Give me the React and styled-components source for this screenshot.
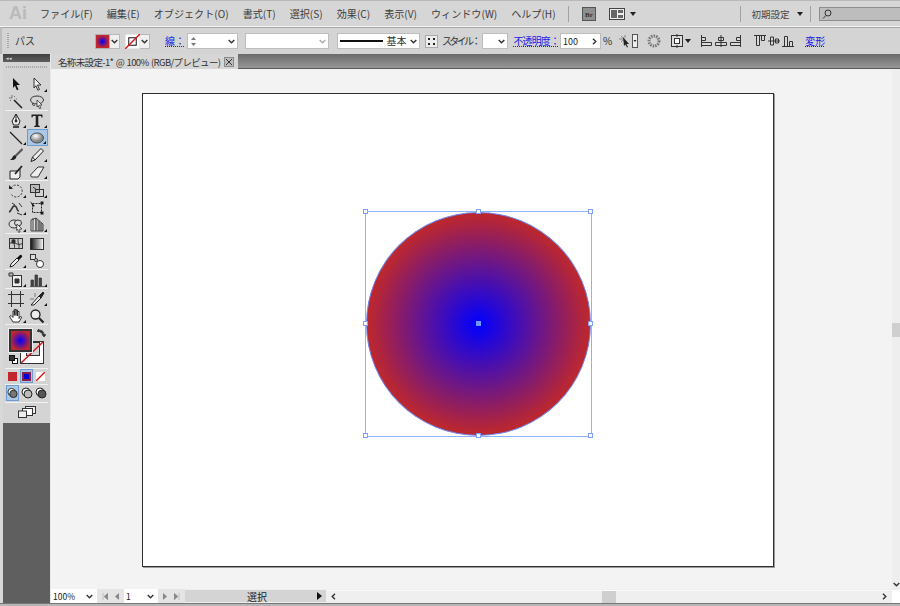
import React from "react";
import styled, { createGlobalStyle } from "styled-components";

const GlobalStyle = createGlobalStyle`
  html, body { margin: 0; padding: 0; background: #d6d6d6; overflow: hidden; }
  body { font-family: "Noto Sans CJK JP", "Liberation Sans", sans-serif; color: #333; }
`;

const Shell = styled.div`
  width: 900px;
  height: 606px;
  display: flex;
  flex-direction: column;
  overflow: hidden;
`;

/* ---- menu bar ---- */
const MenuBar = styled.div`
  height: 27px;
  flex: none;
  box-sizing: border-box;
  display: flex;
  align-items: center;
  background: #d6d6d6;
  border-top: 1px solid #b9b9b9;
  border-bottom: 1px solid #f4f4f4;
`;
const Logo = styled.div`
  width: 40px;
  flex: none;
  padding-left: 9px;
  box-sizing: border-box;
  font: bold 18px "Liberation Sans", sans-serif;
  color: #bababa;
`;
const MenuItem = styled.span`
  font-size: 10.1px;
  color: #3c3c3c;
  margin-right: 14px;
  flex: none;
  white-space: nowrap;
  line-height: 14px;
`;
const VSep = styled.span`
  width: 1px;
  height: 16px;
  background: #a2a2a2;
  margin-left: ${(p) => p.$ml || 0}px;
  flex: none;
`;
const SearchBox = styled.div`
  width: 82px;
  height: 14px;
  margin-left: 8px;
  box-sizing: border-box;
  display: flex;
  align-items: center;
  padding-left: 2px;
  background: #bdbdbd;
  border: 1px solid #8e8e8e;
  border-right: none;
  flex: none;
`;
const Workspace = styled.span`
  font-size: 9.5px;
  color: #444;
  margin-left: 11px;
  flex: none;
  white-space: nowrap;
`;
const Arrow = styled.span`
  width: 0;
  height: 0;
  flex: none;
  margin-left: ${(p) => p.$ml || 0}px;
  border-left: 3px solid transparent;
  border-right: 3px solid transparent;
  border-top: 4px solid #222;
`;
const Placed = styled.span`
  display: flex;
  flex: none;
  align-items: center;
  margin-left: ${(p) => p.$ml || 0}px;
`;

/* ---- control bar ---- */
const ControlBar = styled.div`
  height: 27px;
  flex: none;
  box-sizing: border-box;
  display: flex;
  align-items: center;
  background: #d4d4d4;
  border-left: 2px solid #bcbcbc;
  border-top: 1px solid #a8a8a8;
  padding-left: 5px;
`;
const Grip = styled.span`
  width: 2px;
  height: 16px;
  flex: none;
  background: repeating-linear-gradient(#a9a9a9 0 1px, transparent 1px 2px);
`;
const Label = styled.span`
  font-size: 10px;
  line-height: 14px;
  white-space: nowrap;
  flex: none;
  letter-spacing: ${(p) => p.$tight || 0}px;
  color: ${(p) => (p.$link ? "#1a1ae6" : "#333")};
  text-decoration: ${(p) => (p.$link ? "underline dotted" : "none")};
  margin-left: ${(p) => p.$ml || 0}px;
`;
const Swatch = styled.span`
  width: 15px;
  height: 15px;
  flex: none;
  box-sizing: border-box;
  border: 1px solid #b0b0b0;
  background: ${(p) => p.$bg || "#fff"};
  margin-left: ${(p) => p.$ml || 0}px;
`;
const DropButton = styled.span`
  width: 10px;
  height: 15px;
  flex: none;
  box-sizing: border-box;
  display: flex;
  align-items: center;
  justify-content: center;
  background: #f0f0f0;
  border: 1px solid #b8b8b8;
  border-left: none;
`;
const Field = styled.span`
  height: 16px;
  width: ${(p) => p.$w}px;
  flex: none;
  box-sizing: border-box;
  display: flex;
  align-items: center;
  justify-content: space-between;
  padding: 0 2px;
  background: #fff;
  border: 1px solid #bdbdbd;
  font-size: 9px;
  color: #222;
  margin-left: ${(p) => p.$ml || 0}px;
`;
const StrokeLine = styled.span`
  width: 43px;
  height: 2px;
  flex: none;
  background: #111;
`;

/* ---- work area ---- */
const Work = styled.div`
  flex: 1;
  display: flex;
  min-height: 0;
`;
const Dock = styled.div`
  width: 51px;
  flex: none;
  box-sizing: border-box;
  padding-left: 3px;
  background: #d8d8d8;
`;
const DockInner = styled.div`
  height: 100%;
  background: #5f5f5f;
  border-right: 1px solid #e8e8e8;
`;
const Tools = styled.div`
  background: #d4d4d4;
  padding-bottom: 2px;
`;
const DockHead = styled.div`
  height: 8px;
  background: linear-gradient(#3f3f3f, #5f5f5f);
  color: #ddd;
  font-size: 5px;
  line-height: 8px;
  padding-left: 3px;
`;
const DockGrip = styled.div`
  height: 2px;
  margin: 4px 3px 7px;
  background: repeating-linear-gradient(90deg, #a8a8a8 0 1px, transparent 1px 2px);
`;
const ToolGroup = styled.div`
  display: grid;
  grid-template-columns: 21px 21px;
  grid-auto-rows: 17px;
  justify-content: center;
  padding-top: 1px;
  border-bottom: 1px solid #f1f1f1;
  margin: 0 2px;
`;
const ToolButton = styled.div`
  position: relative;
  display: flex;
  align-items: center;
  justify-content: center;
  box-sizing: border-box;
  ${(p) => p.$active && "background: #a9c8e8; border: 1px solid #6e9cd0;"}
  ${(p) =>
    p.$more &&
    `&::after {
      content: "";
      position: absolute;
      right: 1px;
      bottom: 1px;
      border-left: 3px solid transparent;
      border-bottom: 3px solid #111;
    }`}
`;
const FillStroke = styled.div`
  position: relative;
  height: 43px;
  border-bottom: 1px solid #f1f1f1;
  margin: 0 2px;
`;
const FillBox = styled.div`
  position: absolute;
  left: 4px;
  top: 4px;
  width: 23px;
  height: 23px;
  box-sizing: border-box;
  border: 2px solid #333;
  outline: 1px solid #eee;
  background: radial-gradient(circle, #0000ff 0, #c1272d 75%);
  z-index: 2;
`;
const StrokeBox = styled.div`
  position: absolute;
  left: 15px;
  top: 16px;
  width: 24px;
  height: 23px;
  box-sizing: border-box;
  border: 1px solid #333;
  background: #fff;
`;
const StrokeHole = styled.div`
  position: absolute;
  left: 5px;
  top: 0;
  width: 12px;
  height: 12px;
  border: 1px solid #333;
  background: #d4d4d4;
`;
const StrokeSlash = styled.svg`
  position: absolute;
  left: 0;
  top: 0;
`;
const Corner = styled.div`
  position: absolute;
  left: ${(p) => p.$x}px;
  top: ${(p) => p.$y}px;
  z-index: 3;
  display: flex;
`;
const ModeRow = styled.div`
  display: flex;
  justify-content: center;
  gap: 1px;
  height: ${(p) => p.$h}px;
  border-bottom: 1px solid #f1f1f1;
  margin: 0 2px;
`;
const ModeButton = styled.div`
  width: 13px;
  height: ${(p) => p.$h}px;
  box-sizing: border-box;
  display: flex;
  align-items: center;
  justify-content: center;
  ${(p) => p.$active && "background: #a9c8e8; border: 1px solid #6e9cd0;"}
`;
const ScreenRow = styled.div`
  height: 18px;
  display: flex;
  align-items: center;
  justify-content: center;
`;

const Document = styled.div`
  flex: 1;
  min-width: 0;
  display: flex;
  flex-direction: column;
`;
const TabBar = styled.div`
  height: 15px;
  flex: none;
  box-sizing: border-box;
  background: linear-gradient(#6a6a6a, #979797);
  border-bottom: 1px solid #5a5a5a;
  display: flex;
`;
const Tab = styled.div`
  width: 187px;
  height: 15px;
  box-sizing: border-box;
  display: flex;
  align-items: center;
  padding-left: 7px;
  background: #d6d6d6;
  font-size: 9.5px;
  letter-spacing: -0.65px;
  word-spacing: 1px;
  color: #333;
  white-space: nowrap;
`;
const TabClose = styled.span`
  width: 10px;
  height: 10px;
  margin-left: 4px;
  flex: none;
  box-sizing: border-box;
  display: flex;
  align-items: center;
  justify-content: center;
  background: #bdbdbd;
  border: 1px solid #8a8a8a;
`;
const ViewRow = styled.div`
  flex: 1;
  min-height: 0;
  display: flex;
`;
const Canvas = styled.div`
  flex: 1;
  min-width: 0;
  box-sizing: border-box;
  padding: 24px 0 0 91px;
  background: #f3f3f3;
`;
const Artboard = styled.div`
  width: 632px;
  height: 474px;
  box-sizing: border-box;
  padding: 117px 0 0 222px;
  background: #fff;
  border: 1px solid #2e2e2e;
  box-shadow: 1px 1px 0 #9a9a9a;
`;
const Selection = styled.div`
  position: relative;
  width: 227px;
  height: 226px;
  box-sizing: border-box;
  border: 1px solid #8fb0ff;
`;
const Circle = styled.div`
  width: 225px;
  height: 224px;
  box-sizing: border-box;
  border-radius: 50%;
  border: 1px solid #6f86e6;
  background: radial-gradient(circle closest-side, #0000ff 0%, #bb2730 98%);
`;
const Handle = styled.span`
  position: absolute;
  left: ${(p) => p.$x}%;
  top: ${(p) => p.$y}%;
  width: 5px;
  height: 5px;
  box-sizing: border-box;
  margin: -3px 0 0 -3px;
  background: ${(p) => (p.$center ? "#6f96ff" : "#fff")};
  border: 1px solid ${(p) => (p.$center ? "#6f96ff" : "#7f9fff")};
`;
const VScroll = styled.div`
  width: 8px;
  flex: none;
  display: flex;
  flex-direction: column;
  align-items: center;
  padding: 254px 0 0;
  box-sizing: border-box;
  background: #eeeeee;
`;
const VThumb = styled.div`
  width: 8px;
  height: 14px;
  background: #cfcfcf;
  flex: none;
`;
const ScrollEnd = styled.div`
  margin-top: auto;
  height: 10px;
  display: flex;
  align-items: center;
`;
const StatusBar = styled.div`
  height: 14px;
  flex: none;
  display: flex;
  align-items: center;
  background: #efefef;
`;
const StatusSelect = styled.div`
  width: ${(p) => p.$w}px;
  height: 14px;
  flex: none;
  box-sizing: border-box;
  display: flex;
  align-items: center;
  justify-content: space-between;
  padding: 0 4px 0 2px;
  background: #fff;
  font-size: 8.5px;
  color: #222;
  line-height: 14px;
`;
const NavGroup = styled.div`
  width: ${(p) => p.$w}px;
  flex: none;
  display: flex;
  align-items: center;
  justify-content: space-evenly;
  height: 14px;
  background: #e4e4e4;
`;
const StatusText = styled.div`
  width: 141px;
  height: 12px;
  flex: none;
  box-sizing: border-box;
  display: flex;
  align-items: center;
  justify-content: space-between;
  padding: 0 4px 0 62px;
  background: #d4d4d4;
  font-size: 10px;
  color: #222;
`;
const HScroll = styled.div`
  flex: 1;
  min-width: 0;
  height: 13px;
  display: flex;
  align-items: center;
  justify-content: space-between;
  padding: 0 4px;
  box-sizing: border-box;
  background: #efefef;
  border-top: 1px solid #fbfbfb;
`;
const HTrack = styled.div`
  flex: 1;
  display: flex;
`;
const HThumb = styled.div`
  width: 14px;
  height: 12px;
  flex: none;
  margin-left: 265px;
  background: #cfcfcf;
`;
const Corner2 = styled.div`
  width: 8px;
  height: 13px;
  flex: none;
  background: #fff;
`;
const BottomEdge = styled.div`
  height: 3px;
  flex: none;
  background: #b6b6b6;
  border-top: 1px solid #777;
  box-sizing: border-box;
`;
const ChevronSvg = styled.svg`
  flex: none;
  transform: rotate(${(p) => p.$rot}deg);
`;

/* ---- small drawings ---- */
const Chevron = ({ dir = "down", color = "#333" }) => {
  const rot = { down: 0, up: 180, left: 90, right: -90 }[dir];
  return (
    <ChevronSvg width="7" height="5" viewBox="0 0 7 5" $rot={rot}>
      <path d="M.7 1l2.800 2.800L6.300 1" fill="none" stroke={color} strokeWidth="1.400" />
    </ChevronSvg>
  );
};

const NoStroke = ({ size = 14 }) => (
  <svg width={size} height={size} viewBox="0 0 14 14">
    <rect x="0.5" y="0.5" width="13" height="13" fill="#fff" />
    <rect x="3.5" y="3.5" width="7" height="7" fill="none" stroke="#222" />
    <path d="M0 14L14 0" stroke="#d8141c" strokeWidth="1.400" />
  </svg>
);

const toolIcons = {
  select: <path d="M5 1l7 7H8.500l2 4.500-1.600.7-2-4.500L5 11z" fill="#111" />,
  direct: <path d="M5 1l7 7H8.500l2 4.500-1.600.7-2-4.500L5 11z" fill="#eee" stroke="#222" strokeWidth=".9" />,
  wand: (
    <g stroke="#222" fill="none">
      <path d="M6 6l8 8" strokeWidth="1.600" />
      <path d="M4 1v3M1 4h3M6 2l1 1M2 7l1-1M8 5h1" stroke="#777" />
    </g>
  ),
  lasso: (
    <g fill="none" stroke="#333">
      <ellipse cx="8" cy="6" rx="6.500" ry="4" />
      <path d="M4 9c-1 2 0 3 2 2" />
      <path d="M8 6l5 5-2.500.2L12 14l-1.500.6-1.300-3L8 13z" fill="#eee" strokeWidth=".8" />
    </g>
  ),
  pen: (
    <g fill="none" stroke="#222">
      <path d="M8 1L4 8l1.500 4h5L12 8z" fill="#eee" />
      <path d="M8 1v6" />
      <circle cx="8" cy="8" r="1" fill="#222" />
      <path d="M5 14h6" strokeWidth="1.600" />
    </g>
  ),
  type: <path d="M2.500 1.500h11v3h-1L12 3H9.300v9.500l1.500.5v1H5.200v-1l1.500-.5V3H4l-.5 1.500h-1z" fill="#222" />,
  line: <path d="M2 2l12 12" stroke="#222" strokeWidth="1.200" />,
  brush: (
    <g>
      <path d="M14 1L7 8l1.500 1.500L15 3z" fill="#555" />
      <path d="M7 8c-2 0-2 3-5 5 3 .5 6-.5 6.500-3.500z" fill="#222" />
    </g>
  ),
  pencil: (
    <g stroke="#222" fill="#eee">
      <path d="M12 1.500l2.500 2.500L6 13l-4 1.500L3.500 10z" />
      <path d="M3.500 10L6 13" />
    </g>
  ),
  blob: (
    <g stroke="#222" fill="#eee">
      <path d="M2 7h7l3-2v8l-2 2H2z" />
      <path d="M7 10l7-8" strokeWidth="1.800" />
    </g>
  ),
  eraser: <path d="M9 3h6l-6 10H2.500L1.500 11z" fill="#eee" stroke="#333" />,
  rotate: (
    <g fill="none" stroke="#333">
      <path d="M3 5a6 6 0 1 1 0 6" strokeDasharray="2 1.500" />
      <path d="M1 2v4h4z" fill="#222" stroke="none" />
    </g>
  ),
  scale: (
    <g stroke="#333" fill="#bbb">
      <rect x="1.500" y="1.500" width="9" height="8" />
      <rect x="6.500" y="6.500" width="8" height="7" fill="none" />
      <path d="M4 4l4 3" />
    </g>
  ),
  warp: (
    <g fill="none" stroke="#333">
      <path d="M1 12c3-1 3-7 6-6s1 5 4 5" strokeWidth="1.600" />
      <path d="M4 3l3 2M11 3l3 4M9 13l5 2" />
    </g>
  ),
  free: (
    <g fill="none" stroke="#222">
      <rect x="3.500" y="3.500" width="9" height="9" strokeDasharray="2 1" />
      <path d="M1 1l5 5-2 .5L5 9z" fill="#111" stroke="none" />
      <rect x="12" y="2" width="2" height="2" fill="#111" />
      <rect x="12" y="12" width="2" height="2" fill="#111" />
    </g>
  ),
  shape: (
    <g stroke="#333" fill="#ddd">
      <ellipse cx="6" cy="7" rx="5" ry="4" />
      <ellipse cx="10" cy="6" rx="3.500" ry="3" />
      <path d="M9 7l5 5-2.500.2L12 15l-1.500.3-.8-3-1.200 1z" fill="#eee" strokeWidth=".8" />
    </g>
  ),
  persp: (
    <g stroke="#444" fill="#aaa">
      <path d="M2 3l5-2v13H2z" fill="#ddd" />
      <path d="M7 1l7 6v7H7z" />
      <path d="M4 1v13M10 4v10M12 6v8" fill="none" />
    </g>
  ),
  mesh: (
    <g stroke="#333" fill="#ccc">
      <rect x="1.500" y="2.500" width="13" height="10" />
      <path d="M1.500 7.500c4-3 8 3 13 0M6 2.500c-2 3 2 7 0 10M10.500 2.500c-2 3 2 7 0 10" fill="none" />
      <rect x="4" y="4" width="3" height="3" fill="#222" />
    </g>
  ),
  gradient: (
    <g>
      <defs>
        <linearGradient id="bw">
          <stop offset="0" stopColor="#111" />
          <stop offset="1" stopColor="#fff" />
        </linearGradient>
      </defs>
      <rect x="1.500" y="2.500" width="13" height="11" fill="url(#bw)" stroke="#333" />
    </g>
  ),
  dropper: (
    <g>
      <path d="M2 14l1-3 6-6 2 2-6 6z" fill="#eee" stroke="#222" />
      <path d="M9 5l3-3a1.500 1.500 0 0 1 2 2l-3 3z" fill="#111" />
    </g>
  ),
  blend: (
    <g stroke="#333" fill="#ddd">
      <rect x="1.500" y="1.500" width="5" height="5" />
      <circle cx="11" cy="11" r="3.500" fill="#fff" />
      <circle cx="7" cy="7" r="1.500" />
    </g>
  ),
  symbol: (
    <g stroke="#333" fill="#eee">
      <rect x="4.500" y="3.500" width="9" height="11" />
      <path d="M7 7h4v4H7z" fill="#333" />
      <path d="M1 1h4v3H1z" fill="#bbb" />
    </g>
  ),
  graph: <path d="M2 14V8h2.500v6zM6 14V3h2.500v11zM10 14V6h2.500v8zM1 14.500h14" fill="#444" stroke="#333" strokeWidth=".7" />,
  artboard: (
    <g fill="none" stroke="#333">
      <rect x="3.500" y="3.500" width="9" height="9" />
      <path d="M3.500 0v3M12.500 0v3M3.500 13v3M12.500 13v3M0 3.500h3M0 12.500h3M13 3.500h3M13 12.500h3" />
    </g>
  ),
  slice: (
    <g stroke="#222" fill="#eee">
      <path d="M2 14L10 5l2 2-7 7z" />
      <path d="M10 5l4-4 1 1-3 5z" fill="#222" />
      <path d="M1 8h4M6 2v4" fill="none" stroke="#777" />
    </g>
  ),
  hand: <path d="M5 14L1.500 8.500 3 7.500l2 2V3h1.300v4.500-6H8v6-5.500h1.500v6V3.500H11v7l1.300-2 1.500.7L11 14z" fill="#fff" stroke="#222" strokeWidth=".9" />,
  zoom: (
    <g fill="#eee" stroke="#222">
      <circle cx="6.500" cy="6.500" r="4.500" strokeWidth="1.300" />
      <path d="M10 10l4.500 4.500" strokeWidth="2.200" />
    </g>
  ),
};

const ellipseIcon = (
  <>
    <defs>
      <radialGradient id="egg" cx=".4" cy=".3">
        <stop offset="0" stopColor="#fff" />
        <stop offset="1" stopColor="#8a8a8a" />
      </radialGradient>
    </defs>
    <ellipse cx="8" cy="8" rx="6.500" ry="5" fill="url(#egg)" stroke="#333" strokeWidth=".8" />
  </>
);

const Tool = ({ icon, more, active }) => (
  <ToolButton $more={more} $active={active}>
    <svg width="16" height="16" viewBox="0 0 16 16">
      {icon === "ellipse" ? ellipseIcon : toolIcons[icon]}
    </svg>
  </ToolButton>
);

const toolGroups = [
  [["select"], ["direct", 1], ["wand"], ["lasso"]],
  [["pen", 1], ["type", 1], ["line", 1], ["ellipse", 1, 1], ["brush"], ["pencil", 1], ["blob"], ["eraser", 1]],
  [["rotate", 1], ["scale", 1], ["warp", 1], ["free"], ["shape", 1], ["persp", 1]],
  [["mesh"], ["gradient"], ["dropper", 1], ["blend"]],
  [["symbol", 1], ["graph", 1]],
  [["artboard"], ["slice", 1], ["hand", 1], ["zoom"]],
];

const DrawMode = ({ inner }) => (
  <svg width="12" height="12" viewBox="0 0 12 12">
    <circle cx="5" cy="5" r="4" fill="#fff" stroke="#222" />
    <circle cx="7" cy="7" r="4" fill={inner} stroke="#222" />
  </svg>
);

const AlignIcon = ({ d }) => (
  <svg width="14" height="14" viewBox="0 0 14 14">
    <path d={d} fill="#d9d9d9" stroke="#333" />
  </svg>
);

const alignPaths = [
  "M1.500 1v12M1.500 3.500h4v3h-4M1.500 8.500h10v3h-10z",
  "M7 1v12M4.500 3.500h5v3h-5zM1.500 8.500h11v3h-11z",
  "M12.500 1v12M8.500 3.500h4v3h-4zM2.500 8.500h10v3h-10z",
  "M1 1.500h12M3.500 1.500v10h3v-10M8.500 1.500v5h3v-5",
  "M1 7h12M3.500 3h3v8h-3zM8.500 5h3v4h-3z",
  "M1 12.500h12M3.500 2.500h3v10h-3zM8.500 7.500h3v5h-3z",
];

const handles = [
  [0, 0],
  [50, 0],
  [100, 0],
  [0, 50],
  [100, 50],
  [0, 100],
  [50, 100],
  [100, 100],
];

const menuItems = [
  "ファイル(F)",
  "編集(E)",
  "オブジェクト(O)",
  "書式(T)",
  "選択(S)",
  "効果(C)",
  "表示(V)",
  "ウィンドウ(W)",
  "ヘルプ(H)",
];

const gradientSwatch = "radial-gradient(circle, #0000ff 0, #c1272d 65%)";

const App = () => (
  <Shell>
    <GlobalStyle />
    <MenuBar>
      <Logo>Ai</Logo>
      {menuItems.map((m) => (
        <MenuItem key={m}>{m}</MenuItem>
      ))}
      <VSep $ml={-2} />
      <Placed $ml={13}>
        <svg width="14" height="14" viewBox="0 0 14 14">
          <rect x=".5" y=".5" width="13" height="13" fill="#8f8f8f" stroke="#555" />
          <text x="7" y="10" textAnchor="middle" fontSize="7" fontWeight="bold" fill="#333" fontFamily="Liberation Serif">Br</text>
        </svg>
      </Placed>
      <Placed $ml={13}>
        <svg width="16" height="12" viewBox="0 0 16 12">
          <rect x=".5" y=".5" width="15" height="11" fill="#eee" stroke="#444" />
          <rect x="2" y="2" width="6" height="8" fill="#666" />
          <rect x="9" y="2" width="5" height="3" fill="#666" />
          <rect x="9" y="7" width="5" height="3" fill="#666" />
        </svg>
      </Placed>
      <Arrow $ml={5} />
      <VSep $ml={104} />
      <Workspace>初期設定</Workspace>
      <Arrow $ml={7} />
      <VSep $ml={7} />
      <SearchBox>
        <svg width="10" height="10" viewBox="0 0 10 10">
          <circle cx="6" cy="4" r="3" fill="none" stroke="#333" />
          <path d="M4 6.500L1 9.500" stroke="#333" />
        </svg>
      </SearchBox>
    </MenuBar>

    <ControlBar>
      <Grip />
      <Label $ml={6}>パス</Label>
      <Swatch $ml={60} $bg={gradientSwatch} />
      <DropButton><Chevron /></DropButton>
      <Placed $ml={5}><NoStroke size={15} /></Placed>
      <DropButton><Chevron /></DropButton>
      <Label $link $ml={15}>線：</Label>
      <Field $w={51} $ml={2}>
        <svg width="7" height="11" viewBox="0 0 7 11">
          <path d="M1 4l2.500-3L6 4zM1 7l2.500 3L6 7z" fill="#777" />
        </svg>
        <Chevron />
      </Field>
      <Field $w={84} $ml={7}>
        <span />
        <Chevron color="#aaa" />
      </Field>
      <Field $w={83} $ml={8}>
        <StrokeLine />
        <Label>基本</Label>
        <Chevron />
      </Field>
      <Placed $ml={5}>
        <svg width="13" height="13" viewBox="0 0 13 13">
          <rect x=".5" y=".5" width="12" height="12" fill="#eee" stroke="#aaa" />
          <path d="M3 3h2v2H3zM8 3h2v2H8zM3 8h2v2H3zM8 8h2v2H8z" fill="#222" />
        </svg>
      </Placed>
      <Label $ml={4} $tight={-2.7}>スタイル：</Label>
      <Field $w={26} $ml={3}>
        <span />
        <Chevron />
      </Field>
      <Label $link $ml={6} $tight={-0.9}>不透明度：</Label>
      <Field $w={41} $ml={1}>
        100
        <Chevron dir="right" />
      </Field>
      <Label $ml={2}>%</Label>
      <Placed $ml={6}>
        <svg width="20" height="14" viewBox="0 0 20 14">
          <path d="M1 5h5M3 2l2 2M3 8l2-2M7 1v3" stroke="#888" fill="none" />
          <path d="M5 3l6 7-2.500 0L10 13l-1 .5-1.500-3L6 12z" fill="#222" />
          <rect x="14.500" y=".5" width="5" height="13" fill="#eee" stroke="#555" />
          <path d="M15.500 6h3l-1.500 2z" fill="#222" />
        </svg>
      </Placed>
      <Placed $ml={9}>
        <svg width="14" height="14" viewBox="0 0 14 14">
          <circle cx="7" cy="7" r="5" fill="none" stroke="#777" strokeWidth="3" strokeDasharray="1.500 1" />
        </svg>
      </Placed>
      <Placed $ml={9}>
        <svg width="14" height="14" viewBox="0 0 14 14">
          <rect x="1.500" y="1.500" width="11" height="11" fill="#ddd" stroke="#333" />
          <rect x="4.500" y="4.500" width="5" height="5" fill="#fff" stroke="#333" />
          <path d="M7 0v3M7 11v3" stroke="#333" />
        </svg>
      </Placed>
      <Arrow $ml={1} />
      <Placed $ml={9}>
        {alignPaths.slice(0, 3).map((d) => (
          <AlignIcon key={d} d={d} />
        ))}
      </Placed>
      <Placed $ml={11}>
        {alignPaths.slice(3).map((d) => (
          <AlignIcon key={d} d={d} />
        ))}
      </Placed>
      <Label $link $ml={10}>変形</Label>
    </ControlBar>

    <Work>
      <Dock>
        <DockInner>
          <Tools>
            <DockHead>◂◂</DockHead>
            <DockGrip />
            {toolGroups.map((group) => (
              <ToolGroup key={group[0][0]}>
                {group.map(([icon, more, active]) => (
                  <Tool key={icon} icon={icon} more={more} active={active} />
                ))}
              </ToolGroup>
            ))}
            <FillStroke>
              <FillBox />
              <StrokeBox>
                <StrokeHole />
                <StrokeSlash width="22" height="21" viewBox="0 0 22 21">
                  <path d="M0 21L22 0" stroke="#d8141c" strokeWidth="1.500" />
                </StrokeSlash>
              </StrokeBox>
              <Corner $x={31} $y={3}>
                <svg width="10" height="10" viewBox="0 0 10 10">
                  <path d="M2 3c3-2 6 0 6 4M1 3l2-2v3zM8 9L6 6.500h4z" fill="#333" stroke="#333" strokeWidth=".7" />
                </svg>
              </Corner>
              <Corner $x={4} $y={30}>
                <svg width="9" height="9" viewBox="0 0 9 9">
                  <rect x="3.500" y="3.500" width="5" height="5" fill="#fff" stroke="#111" />
                  <rect x=".5" y=".5" width="5" height="5" fill="#333" stroke="#111" />
                </svg>
              </Corner>
            </FillStroke>
            <ModeRow $h={15}>
              <ModeButton $h={14}>
                <svg width="9" height="9"><rect width="9" height="9" fill="#c1272d" /></svg>
              </ModeButton>
              <ModeButton $h={14} $active>
                <svg width="9" height="9"><rect width="9" height="9" fill="#8a1c4a" /><rect x="2" y="2" width="5" height="5" fill="#0000d8" /></svg>
              </ModeButton>
              <ModeButton $h={14}>
                <svg width="9" height="9" viewBox="0 0 9 9"><rect width="9" height="9" fill="#fff" /><path d="M0 9L9 0" stroke="#d8141c" strokeWidth="1.400" /></svg>
              </ModeButton>
            </ModeRow>
            <ModeRow $h={17}>
              <ModeButton $h={16} $active><DrawMode inner="#777" /></ModeButton>
              <ModeButton $h={16}><DrawMode inner="#bbb" /></ModeButton>
              <ModeButton $h={16}><DrawMode inner="#555" /></ModeButton>
            </ModeRow>
            <ScreenRow>
              <svg width="18" height="12" viewBox="0 0 18 12">
                <rect x="7.500" y=".5" width="10" height="7" fill="#eee" stroke="#333" />
                <rect x="4.500" y="2.500" width="10" height="7" fill="#fff" stroke="#333" />
                <rect x=".5" y="5" width="8" height="6.500" fill="#eee" stroke="#333" />
              </svg>
            </ScreenRow>
          </Tools>
        </DockInner>
      </Dock>

      <Document>
        <TabBar>
          <Tab>
            名称未設定-1* @ 100% (RGB/プレビュー)
            <TabClose>
              <svg width="6" height="6" viewBox="0 0 6 6"><path d="M0 0l6 6M6 0L0 6" stroke="#333" /></svg>
            </TabClose>
          </Tab>
        </TabBar>
        <ViewRow>
          <Canvas>
            <Artboard>
              <Selection>
                <Circle />
                {handles.map(([x, y]) => (
                  <Handle key={`${x}-${y}`} $x={x} $y={y} />
                ))}
                <Handle $x={50} $y={50} $center />
              </Selection>
            </Artboard>
          </Canvas>
          <VScroll>
            <VThumb />
            <ScrollEnd><Chevron /></ScrollEnd>
          </VScroll>
        </ViewRow>
        <StatusBar>
          <StatusSelect $w={46}>100%<Chevron /></StatusSelect>
          <NavGroup $w={27}>
            <svg width="6" height="7"><path d="M1 0v7M6 0v7L2 3.500z" fill="#888" stroke="#888" strokeWidth=".4" /></svg>
            <svg width="5" height="7"><path d="M5 0v7L1 3.500z" fill="#888" /></svg>
          </NavGroup>
          <StatusSelect $w={34}>1<Chevron /></StatusSelect>
          <NavGroup $w={27}>
            <svg width="5" height="7"><path d="M0 0v7l4-3.500z" fill="#888" /></svg>
            <svg width="6" height="7"><path d="M5 0v7M0 0v7l4-3.500z" fill="#888" stroke="#888" strokeWidth=".4" /></svg>
          </NavGroup>
          <StatusText>
            選択
            <svg width="5" height="8"><path d="M0 0v8l5-4z" fill="#111" /></svg>
          </StatusText>
          <HScroll>
            <Chevron dir="left" />
            <HTrack><HThumb /></HTrack>
            <Chevron dir="right" />
          </HScroll>
          <Corner2 />
        </StatusBar>
      </Document>
    </Work>
    <BottomEdge />
  </Shell>
);

export default App;
